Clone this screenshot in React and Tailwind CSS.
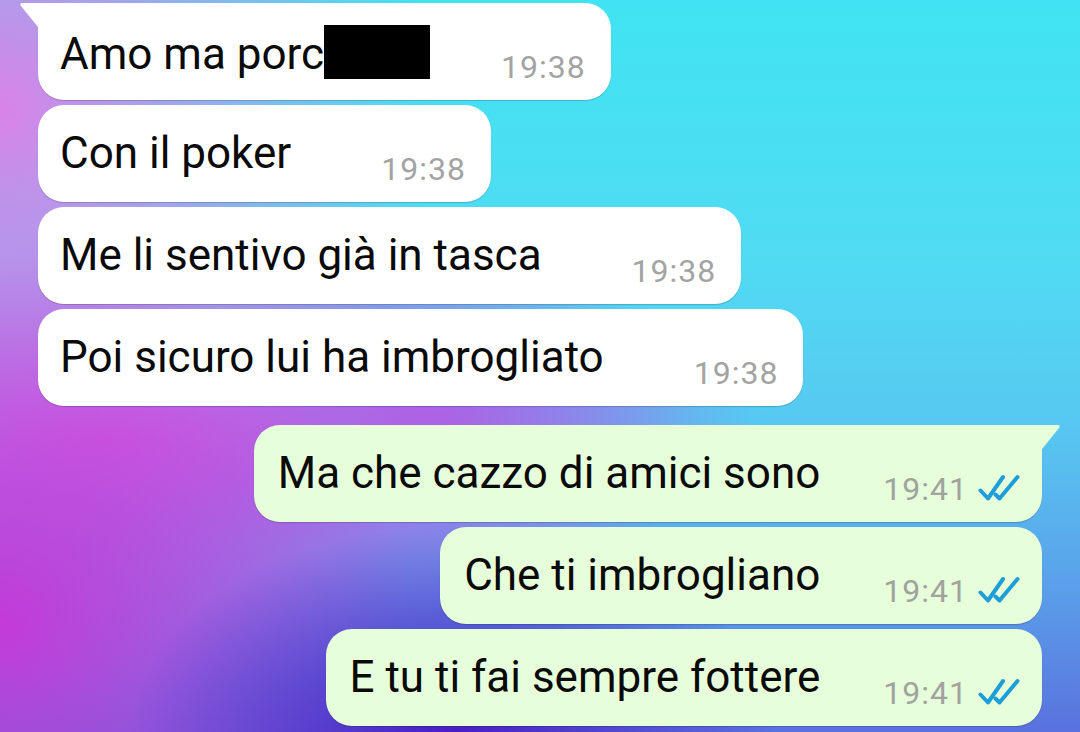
import React from "react";

const incoming = [
  { text: "Amo ma porc", redacted: true, time: "19:38" },
  { text: "Con il poker", time: "19:38" },
  { text: "Me li sentivo già in tasca", time: "19:38" },
  { text: "Poi sicuro lui ha imbrogliato", time: "19:38" },
];

const outgoing = [
  { text: "Ma che cazzo di amici sono", time: "19:41" },
  { text: "Che ti imbrogliano", time: "19:41" },
  { text: "E tu ti fai sempre fottere", time: "19:41" },
];

function Checks() {
  return (
    <svg width="42" height="27" viewBox="0 0 42 27" className="shrink-0">
      <g fill="none" stroke="#1e9ed8" strokeWidth="4" strokeLinecap="round" strokeLinejoin="round">
        <path d="M2.5 16.5 L10 24.5 L25 3" />
        <path d="M17.5 20.5 L21.5 24.5 L39.5 3" />
      </g>
    </svg>
  );
}

function InBubble({ m, first }) {
  return (
    <div className="relative self-start ml-[38px]">
      {first && (
        <svg width="22" height="27" viewBox="0 0 22 27" className="absolute left-[-19px] top-0">
          <path d="M22 0 L3.5 0 Q0 0 2 3 L19 24 L22 27 Z" fill="#ffffff" />
        </svg>
      )}
      <div
        className={
          "flex items-start h-[97px] pt-[22px] pl-[22px] pr-[25px] bg-white rounded-[26px] shadow-[0_1px_1px_rgba(0,0,0,0.18)] " +
          (first ? "rounded-tl-none" : "")
        }
      >
        <span className="text-[44px] leading-[52px] text-[#0a0a0a] whitespace-nowrap font-['Roboto',sans-serif]">
          {m.text}
          {m.redacted && (
            <span className="inline-block w-[106px] h-[54px] bg-black align-[-10px]" />
          )}
        </span>
        <span
          className={
            "mt-[24px] text-[32px] leading-[36px] tracking-[1px] text-[#a3a3a3] whitespace-nowrap font-['Roboto',sans-serif] " +
            (m.redacted ? "ml-[71px]" : "ml-[90px]")
          }
        >
          {m.time}
        </span>
      </div>
    </div>
  );
}

function OutBubble({ m, first }) {
  return (
    <div className="relative self-end mr-[38px]">
      {first && (
        <svg width="22" height="27" viewBox="0 0 22 27" className="absolute right-[-19px] top-0">
          <path d="M0 0 L18.5 0 Q22 0 20 3 L3 24 L0 27 Z" fill="#e7fedb" />
        </svg>
      )}
      <div
        className={
          "flex items-start h-[97px] pt-[22px] pl-[24px] pr-[22px] bg-[#e7fedb] rounded-[26px] shadow-[0_1px_1px_rgba(0,0,0,0.18)] " +
          (first ? "rounded-tr-none" : "")
        }
      >
        <span className="text-[44px] leading-[52px] text-[#0a0a0a] whitespace-nowrap font-['Roboto',sans-serif]">
          {m.text}
        </span>
        <span className="ml-[63px] mt-[24px] text-[32px] leading-[36px] tracking-[1px] text-[#a0a39d] whitespace-nowrap font-['Roboto',sans-serif]">
          {m.time}
        </span>
        <span className="ml-[10px] mt-[27px]">
          <Checks />
        </span>
      </div>
    </div>
  );
}

export default function App() {
  return (
    <div className="w-[1080px] h-[732px] overflow-hidden font-['Roboto',sans-serif] bg-[radial-gradient(ellipse_30%_28%_at_42%_100%,#4a1fc2_0%,rgba(74,31,194,0)_100%),radial-gradient(ellipse_38%_50%_at_0%_85%,#c43ad8_0%,rgba(196,58,216,0)_100%),radial-gradient(ellipse_40%_62%_at_0%_15%,#d982e8_0%,rgba(217,130,232,0)_100%),radial-gradient(ellipse_55%_35%_at_10%_60%,#c655e2_0%,rgba(198,85,226,0)_100%),radial-gradient(ellipse_30%_20%_at_40%_57%,#9a6ae6_0%,rgba(154,106,230,0)_100%),linear-gradient(180deg,#40e3f3_0%,#50dbf3_35%,#57c8f1_58%,#5aa0ea_80%,#5a72de_100%)]">
      <div className="flex flex-col pt-[3px]">
        <div className="flex flex-col gap-[5px]">
          {incoming.map((m, i) => (
            <InBubble key={i} m={m} first={i === 0} />
          ))}
        </div>
        <div className="flex flex-col gap-[5px] mt-[19px]">
          {outgoing.map((m, i) => (
            <OutBubble key={i} m={m} first={i === 0} />
          ))}
        </div>
      </div>
    </div>
  );
}
